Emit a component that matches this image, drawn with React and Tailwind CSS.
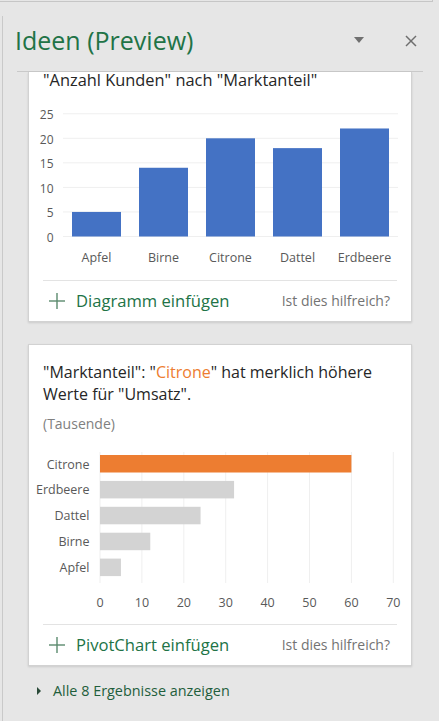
import React from 'react'

const kunden = [
  { name: 'Apfel', value: 5 },
  { name: 'Birne', value: 14 },
  { name: 'Citrone', value: 20 },
  { name: 'Dattel', value: 18 },
  { name: 'Erdbeere', value: 22 },
]

const umsatz = [
  { name: 'Citrone', value: 60, hi: true },
  { name: 'Erdbeere', value: 32 },
  { name: 'Dattel', value: 24 },
  { name: 'Birne', value: 12 },
  { name: 'Apfel', value: 5 },
]

function ColumnChart() {
  const base = 137.5
  const step = 24.55 / 5
  return (
    <svg width="382" height="172" className="block">
      {[0, 1, 2, 3, 4, 5].map((k) => (
        <g key={k}>
          <line x1="34" x2="369" y1={base - k * 24.55} y2={base - k * 24.55} stroke="#efefef" strokeWidth="1" />
          <text x="24.5" y={base - k * 24.55 + 1} textAnchor="end" dominantBaseline="central" fontSize="12" fill="#595959">
            {k * 5}
          </text>
        </g>
      ))}
      {kunden.map((d, i) => {
        const cx = 34 + 67 * (i + 0.5)
        const h = d.value * step
        return (
          <g key={d.name}>
            <rect x={cx - 24.5} y={base - h} width="49" height={h} fill="#4472c4" />
            <text x={cx} y="158" textAnchor="middle" dominantBaseline="central" fontSize="12.5" fill="#595959">
              {d.name}
            </text>
          </g>
        )
      })}
    </svg>
  )
}

function BarChart() {
  const x0 = 71
  const unit = 4.19
  return (
    <svg width="382" height="170" className="block">
      {[0, 1, 2, 3, 4, 5, 6, 7].map((k) => (
        <g key={k}>
          <line x1={x0 + k * 41.9} x2={x0 + k * 41.9} y1="7" y2="138" stroke="#efefef" strokeWidth="1" />
          <text x={x0 + k * 41.9} y="157" textAnchor="middle" dominantBaseline="central" fontSize="12.5" fill="#595959">
            {k * 10}
          </text>
        </g>
      ))}
      {umsatz.map((d, i) => {
        const y = 10 + 25.9 * i
        return (
          <g key={d.name}>
            <rect x={x0} y={y} width={d.value * unit} height="17.5" fill={d.hi ? '#ed7d31' : '#d3d3d3'} />
            <text x="60.5" y={y + 9} textAnchor="end" dominantBaseline="central" fontSize="12.5" fill="#595959">
              {d.name}
            </text>
          </g>
        )
      })}
    </svg>
  )
}

function CardFooter({ label }) {
  return (
    <div className="mx-[14px] border-t border-[#e3e3e3]">
      <div className="flex items-center justify-between h-[40px] pl-[6px] pr-[7px]">
        <div className="flex items-center">
          <svg width="16" height="16" viewBox="0 0 16 16" className="block">
            <line x1="8" y1="0" x2="8" y2="16" stroke="#5b8a6e" strokeWidth="1.4" />
            <line x1="0" y1="8" x2="16" y2="8" stroke="#5b8a6e" strokeWidth="1.4" />
          </svg>
          <span className="ml-[11px] text-[16.6px] text-[#217346] leading-none">{label}</span>
        </div>
        <span className="text-[14px] text-[#737373] leading-none">Ist dies hilfreich?</span>
      </div>
    </div>
  )
}

export default function App() {
  return (
    <div className="h-[721px] w-[439px] overflow-hidden bg-[#e6e6e6] font-['Open_Sans',sans-serif] flex flex-col">
      <div className="h-[2px] w-[433px] border-b border-r border-[#c6c6c6] shrink-0"></div>
      <div className="flex flex-1 min-h-0">
        <div className="w-[2px] shrink-0"></div>
        <div className="flex-1 mt-[14px] border-l border-[#c9c9c9] flex flex-col min-h-0">
          <div className="flex items-center h-[56px] ml-[14px] mr-[16px] border-b border-[#c9c9c9] shrink-0">
            <h1 className="text-[25px] text-[#217346] leading-none -mt-[6px] -ml-[2px]">Ideen (Preview)</h1>
            <div className="flex-1"></div>
            <svg width="10" height="6" viewBox="0 0 10 6" className="block -mt-[8px] mr-[41px]">
              <polygon points="0,0 10,0 5,6" fill="#707070" />
            </svg>
            <svg width="12" height="12" viewBox="0 0 12 12" className="block -mt-[5px] mr-[6px]">
              <line x1="1" y1="1" x2="11" y2="11" stroke="#6e6e6e" strokeWidth="1.5" />
              <line x1="11" y1="1" x2="1" y2="11" stroke="#6e6e6e" strokeWidth="1.5" />
            </svg>
          </div>

          <div className="flex flex-col ml-[25px] w-[384px]">
            <div className="bg-white border-x border-b border-[#d2d2d2] shadow-[0_1px_2px_rgba(0,0,0,0.12)]">
              <div className="px-[14px] text-[16.4px] leading-[16px] text-[#262626]">
                "Anzahl Kunden" nach "Marktanteil"
              </div>
              <div className="mt-[11px]">
                <ColumnChart />
              </div>
              <div className="mt-[9px]">
                <CardFooter label="Diagramm einfügen" />
              </div>
            </div>

            <div className="mt-[22px] bg-white border border-[#d2d2d2] shadow-[0_1px_2px_rgba(0,0,0,0.12)]">
              <p className="px-[14px] pt-[16px] text-[16px] leading-[22px] text-[#262626]">
                "Marktanteil": "<span className="text-[#ed7d31]">Citrone</span>" hat merklich höhere Werte für "Umsatz".
              </p>
              <div className="px-[14px] mt-[9px] text-[14px] leading-[20px] text-[#808080]">(Tausende)</div>
              <div className="mt-[11px]">
                <BarChart />
              </div>
              <div className="mt-[9px]">
                <CardFooter label="PivotChart einfügen" />
              </div>
            </div>

            <div className="flex items-center mt-[18px] ml-[9px]">
              <svg width="4" height="8" viewBox="0 0 4 8" className="block">
                <polygon points="0,0 4,4 0,8" fill="#2a4a38" />
              </svg>
              <span className="ml-[12px] text-[14.4px] leading-none text-[#1f5e3c]">Alle 8 Ergebnisse anzeigen</span>
            </div>
          </div>
        </div>
      </div>
    </div>
  )
}
